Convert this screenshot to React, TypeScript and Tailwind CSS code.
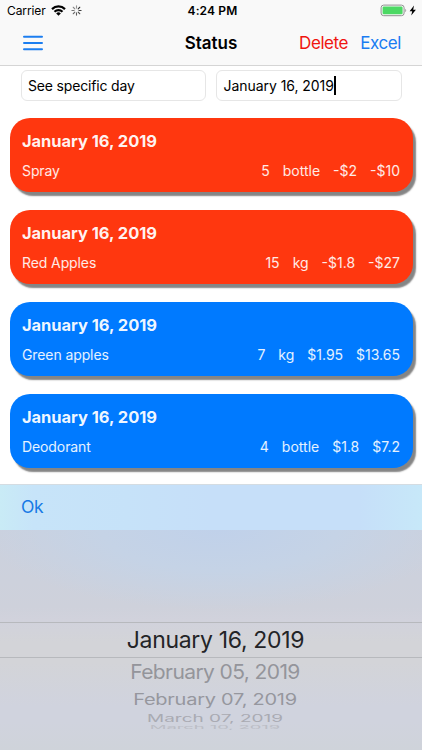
import clsx from "clsx";

type Item = {
  date: string;
  name: string;
  values: string[];
  loss: boolean;
};

const items: Item[] = [
  { date: "January 16, 2019", name: "Spray", values: ["5", "bottle", "-$2", "-$10"], loss: true },
  { date: "January 16, 2019", name: "Red Apples", values: ["15", "kg", "-$1.8", "-$27"], loss: true },
  { date: "January 16, 2019", name: "Green apples", values: ["7", "kg", "$1.95", "$13.65"], loss: false },
  { date: "January 16, 2019", name: "Deodorant", values: ["4", "bottle", "$1.8", "$7.2"], loss: false },
];

// rows below the selected one, squashed as the wheel turns away
const wheel = [
  { label: "February 05, 2019", row: "h-[27px]", text: "text-[21px] tracking-[-0.6px] text-[#94959b] scale-y-[0.94]" },
  { label: "February 07, 2019", row: "h-[29px]", text: "text-[20px] tracking-[-0.25px] text-[#96979e] scale-y-[0.76]" },
  { label: "March 07, 2019", row: "h-[9px]", text: "text-[19px] tracking-[0px] text-[#a9aab2] scale-y-[0.54]" },
  { label: "March 10, 2019", row: "h-[9px]", text: "text-[18.5px] tracking-[-0.1px] text-[#bbbdc5] scale-y-[0.26]" },
];

function StatusBar() {
  return (
    <div className="relative flex h-[22px] items-center justify-between pl-[7px] pr-[5px] text-[12px]">
      <div className="flex items-center">
        <span className="w-[38px] whitespace-nowrap tracking-[-0.1px]">Carrier</span>
        <svg className="-mt-px ml-[6px]" width="15" height="11" viewBox="0 0 15 11" fill="none" stroke="#000" strokeWidth="2.2">
          <path d="M1 4.1a9.3 9.3 0 0 1 13 0" />
          <path d="M3.5 6.8a5.7 5.7 0 0 1 8 0" />
          <path d="M7.5 10.8 5.2 8.5a3.2 3.2 0 0 1 4.6 0Z" fill="#000" stroke="none" />
        </svg>
        <svg className="-mt-px ml-[5px]" width="11" height="11" viewBox="-5.5 -5.5 11 11" stroke="#333" strokeWidth="1.1" strokeLinecap="round">
          {[0, 45, 90, 135, 180, 225, 270, 315].map((deg, i) => (
            <path key={deg} d="M0-2.4V-4.6" transform={`rotate(${deg})`} opacity={1 - ((i + 7) % 8) * 0.07} />
          ))}
        </svg>
      </div>
      <span className="absolute left-[187.5px] font-semibold tracking-[0.15px]">4:24 PM</span>
      <svg className="-mt-px" width="37" height="13" viewBox="0 0 37 13">
        <rect x="1.1" y="1.1" width="23" height="10.6" rx="2.6" fill="none" stroke="#919191" />
        <rect x="2.6" y="2.6" width="20" height="7.6" rx="1.2" fill="#4cd964" />
        <path d="M25.3 4.7c1.2.4 1.2 3 0 3.4Z" fill="#919191" />
        <path d="M34 1.6 29.6 7.2h2.6l-1 4.4L35.9 5.7h-2.7Z" fill="#000" />
      </svg>
    </div>
  );
}

function Card({ item }: { item: Item }) {
  return (
    <div
      className={clsx(
        "h-[74px] rounded-[20px] pl-[12.5px] pr-[12.5px] pt-[10.5px] text-white shadow-[3px_4px_1.5px_#858585]",
        item.loss ? "bg-[#ff370f]" : "bg-[#007aff]"
      )}
    >
      <div className="text-[16.5px] leading-6 font-bold tracking-[-0.05px] text-white/95">{item.date}</div>
      <div className="mt-[8.5px] flex justify-between text-[14px] leading-5 text-white/90">
        <span className="tracking-[-0.1px]">{item.name}</span>
        <div className="flex gap-[13px]">
          {item.values.map((v) => (
            <span key={v}>{v}</span>
          ))}
        </div>
      </div>
    </div>
  );
}

function Picker() {
  return (
    <div className="h-[266px] overflow-hidden">
      <div className="flex h-[46px] items-center border-t border-[#d4dce2] bg-[linear-gradient(90deg,#c9ebf6_0%,#c7e4f9_8%,#c6e2f9_30%,#c6dff9_50%,#c6dff9_85%,#c7e8f9_100%)] pl-[21px] text-[17.5px] tracking-[-0.5px] text-[#1679e5]">
        Ok
      </div>
      <div className="h-[220px] bg-[radial-gradient(ellipse_235px_80px_at_52%_0%,#c0d1ea_0%,#c5d3e6_50%,#c5d3e600_100%),linear-gradient(180deg,#cbd1de_0%,#ced1db_35%,#d1d2dc_41%,#d3d4d8_51%,#d3d4d8_60%,#d0d3de_80%,#d0d3de_87%,#cfd3da_100%)] pt-[92px]">
        <div className="flex h-[36px] items-center justify-center border-y border-[#b7b9bd] pl-[9px] text-[23px] tracking-[-0.33px] whitespace-nowrap text-[#232427]">
          January 16, 2019
        </div>
        {wheel.map((w) => (
          <div key={w.label} className={clsx("flex items-center justify-center pl-[8px]", w.row)}>
            <span className={clsx("block leading-none whitespace-nowrap", w.text)}>{w.label}</span>
          </div>
        ))}
      </div>
    </div>
  );
}

export default function App() {
  return (
    <div className="flex h-[750px] w-[422px] flex-col overflow-hidden bg-white font-[Inter,'Liberation_Sans',sans-serif] text-black">
      <header className="h-[66px] shrink-0 border-b border-[#d5d5d5] bg-[#f9f9f9]">
        <StatusBar />
        <div className="relative flex h-[43px] items-center justify-between pr-[21px] pl-[23px]">
          <svg className="-mt-[2px]" width="20" height="16" viewBox="0 0 20 16" stroke="#1c7ef0" strokeWidth="2" strokeLinecap="round">
            <path d="M1 1.8h18M1 8h18M1 14.2h18" />
          </svg>
          <span className="absolute inset-x-0 text-center text-[17px] font-semibold">Status</span>
          <div className="relative flex gap-[12px] text-[17px] tracking-[-0.4px]">
            <span className="text-[#f0140f]">Delete</span>
            <span className="text-[#1a7cf2]">Excel</span>
          </div>
        </div>
      </header>

      <div className="flex shrink-0 gap-[10px] px-[20.5px] pt-[4px] text-[14px] leading-[19px]">
        <div className="flex h-[31px] flex-1 items-center rounded-[6px] border border-[#e6e6e6] pl-[6.5px] tracking-[-0.17px]">
          See specific day
        </div>
        <div className="flex h-[31px] flex-1 items-center rounded-[6px] border border-[#e6e6e6] pl-[6.5px] tracking-[-0.05px]">
          January 16, 2019
          <span className="h-[19px] w-[2px] bg-black" />
        </div>
      </div>

      <main className="flex flex-1 flex-col gap-[18px] px-[9.5px] pt-[17px]">
        {items.map((item) => (
          <Card key={item.name} item={item} />
        ))}
      </main>

      <Picker />
    </div>
  );
}
